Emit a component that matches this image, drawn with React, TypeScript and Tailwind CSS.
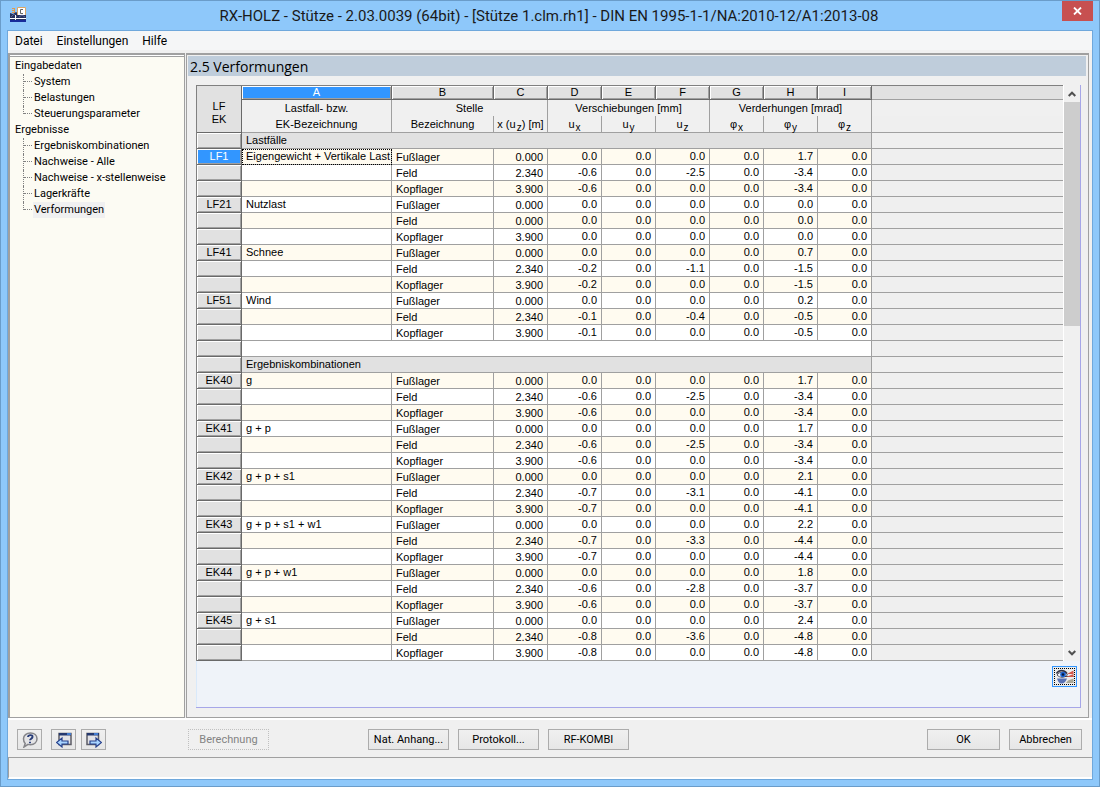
import React from "react";
import { clsx } from "clsx";

interface Load {
  id: string;
  name: string;
  x: string[];
  rows: string[][];
}

interface Section {
  title: string;
  loads: Load[];
}

const X = ["0.000", "2.340", "3.900"];
const PLACES = ["Fußlager", "Feld", "Kopflager"];
const LETTERS = ["A", "B", "C", "D", "E", "F", "G", "H", "I"];
const ZERO = ["0.0", "0.0", "0.0", "0.0", "0.0", "0.0"];

// ux, uz and phi-y are the only values that differ from zero
const values = (ux: string, uz: string, start: string, phi: string) => [
  ["0.0", "0.0", "0.0", "0.0", start, "0.0"],
  [ux, "0.0", uz, "0.0", phi, "0.0"],
  [ux, "0.0", "0.0", "0.0", phi, "0.0"],
];

const SECTIONS: Section[] = [
  {
    title: "Lastfälle",
    loads: [
      { id: "LF1", name: "Eigengewicht + Vertikale Last", x: X, rows: values("-0.6", "-2.5", "1.7", "-3.4") },
      { id: "LF21", name: "Nutzlast", x: ["0.000", "0.000", "3.900"], rows: [ZERO, ZERO, ZERO] },
      { id: "LF41", name: "Schnee", x: X, rows: values("-0.2", "-1.1", "0.7", "-1.5") },
      { id: "LF51", name: "Wind", x: X, rows: values("-0.1", "-0.4", "0.2", "-0.5") },
    ],
  },
  {
    title: "Ergebniskombinationen",
    loads: [
      { id: "EK40", name: "g", x: X, rows: values("-0.6", "-2.5", "1.7", "-3.4") },
      { id: "EK41", name: "g + p", x: X, rows: values("-0.6", "-2.5", "1.7", "-3.4") },
      { id: "EK42", name: "g + p + s1", x: X, rows: values("-0.7", "-3.1", "2.1", "-4.1") },
      { id: "EK43", name: "g + p + s1 + w1", x: X, rows: values("-0.7", "-3.3", "2.2", "-4.4") },
      { id: "EK44", name: "g + p + w1", x: X, rows: values("-0.6", "-2.8", "1.8", "-3.7") },
      { id: "EK45", name: "g + s1", x: X, rows: values("-0.8", "-3.6", "2.4", "-4.8") },
    ],
  },
];

const TREE = [
  { title: "Eingabedaten", items: ["System", "Belastungen", "Steuerungsparameter"] },
  {
    title: "Ergebnisse",
    items: ["Ergebniskombinationen", "Nachweise - Alle", "Nachweise - x-stellenweise", "Lagerkräfte", "Verformungen"],
  },
];

const cell = "h-4 p-0 border-r border-b border-[#a0a0a0] font-normal";
const groupHead = "h-4 border-r border-[#a0a0a0] p-0 font-normal leading-[14px]";
const subHead = "h-[17px] p-0 border-r border-b border-[#a0a0a0] font-normal leading-[14px]";
const raised = "shadow-[inset_1px_1px_0_#fff,inset_-1px_-1px_0_#a0a0a0]";
const rowHead = "h-4 p-0 border-r border-b border-[#696969] font-normal text-center";
const filler = "h-4 p-0 border-b border-[#a0a0a0] bg-[#efefef]";
const button =
  "h-[21px] border border-[#acacac] bg-linear-to-b from-[#f0f0f0] to-[#e6e6e6] text-[11px] leading-[19px] whitespace-nowrap flex items-center justify-center";

const AppIcon = () => (
  <svg width="16" height="16" viewBox="0 0 16 16" aria-hidden="true">
    <path d="M2 1h3v5H2V5h2V4H2V3h2V2H2z" fill="#e39a4c" />
    <path d="M0 6l3 1 3-2 3 2h7v8H0z" fill="#27325f" />
    <path d="M7.500.500h8v8h-8z" fill="#fff" stroke="#dca868" />
    <path d="M13 2.500h-2.500v4H13" fill="none" stroke="#666" />
    <path d="M0 8h16v6.500H0z" fill="#27325f" />
    <path d="M1 10l3-3 3 3M9 10l3-2 3 2" fill="none" stroke="#6672a0" strokeWidth=".8" />
    <path d="M0 11h16v1H0zM5 8h1v6H5z" fill="#fff" />
    <path d="M0 13h16v2H0z" fill="#182c9a" />
  </svg>
);

const HelpIcon = () => (
  <svg width="18" height="16" viewBox="0 0 18 16" aria-hidden="true">
    <path
      d="M9.500 1c3.800 0 6.500 2.400 6.500 5.800s-2.700 5.900-6.500 5.900c-1 0-1.700-.1-2.400-.300L3 15l1.200-3.500C3 10.400 2.500 8.800 2.500 6.800 2.500 3.400 5.500 1 9.500 1z"
      fill="#e4e4e6"
      stroke="#858589"
      strokeWidth="1.500"
    />
    <path d="M7 5c.3-2.600 5-2.500 4.500 0-.3 1.700-2.500 1.700-2.500 3.300M9 9.700v1.600" fill="none" stroke="#283c78" strokeWidth="1.900" />
  </svg>
);

const SheetIcon = ({ next }: { next?: boolean }) => (
  <svg width="16" height="16" viewBox="0 0 16 16" aria-hidden="true">
    <path d={next ? "M1 1.500h11.500v11H1z" : "M3 1.500h12v11H3z"} fill="#e2e2e6" stroke="#5c5c66" strokeWidth="1.500" />
    <path d={next ? "M1 1h12v2.500H1z" : "M3 1h12v2.500H3z"} fill="#24386e" />
    <path d={next ? "M8 2h4" : "M11 2h4"} stroke="#4d92f0" strokeWidth="1.500" />
    <path
      d={next ? "M4 9h6V6l5.500 4.500L10 15v-3H4z" : "M12 9H6V6L.500 10.500 6 15v-3h6z"}
      fill="#a8d4ff"
      stroke="#26408c"
      strokeWidth="1.200"
    />
  </svg>
);

const EyeIcon = () => (
  <svg width="18" height="15" viewBox="0 0 18 15" aria-hidden="true">
    <path d="M1 9.500h10c-1 3-3 5-5.500 5S2 12.500 1 9.500z" fill="#5a72b4" />
    <path d="M1 6c3-4 8-4 10.500 0C8 9 4 9 1 6z" fill="#f4f6ff" stroke="#555562" />
    <path d="M.500 4.500C3 .500 8 .500 11 4.500" fill="none" stroke="#333344" strokeWidth="1.600" />
    <circle cx="7" cy="5.500" r="2.800" fill="#1d63d0" />
    <circle cx="7" cy="5.500" r="1.200" fill="#0a1838" />
    <path d="M11 5l6.500-3.500V5z" fill="#d2574a" />
    <path d="M9 7h8.500v1H9z" fill="#444" />
    <path d="M10 8l7.500-3v3z" fill="#d2574a" />
    <path d="M10 14l2-2.500 5.500-2V14z" fill="#a9a797" />
  </svg>
);

const Chevron = ({ down }: { down?: boolean }) => (
  <svg width="8" height="6" viewBox="0 0 8 6" aria-hidden="true">
    <path d={down ? "M.700 1L4 4.300 7.300 1" : "M.700 5L4 1.700 7.300 5"} fill="none" stroke="#505050" strokeWidth="2" />
  </svg>
);

const Sub = ({ base, index }: { base: string; index: string }) => (
  <>
    {base}
    <sub className="ml-px text-[10px]">{index}</sub>
  </>
);

const Navigator = () => (
  <nav className="w-[177px] shrink-0 border-t-2 border-l-2 border-r border-b border-[#a0a0a0] bg-white pt-px">
    <div className="h-full border-t border-[#a0a0a0] bg-[#fcfbf3] pt-px pl-[5px] text-[11px] leading-4">
      {TREE.map((group) => (
        <div key={group.title}>
          <div>{group.title}</div>
          <ul>
            {group.items.map((item, i) => (
              <li key={item} className="flex pl-2">
                <span
                  className={clsx(
                    "w-px border-l border-dotted border-[#808080]",
                    i === group.items.length - 1 ? "h-2" : "h-4"
                  )}
                />
                <span className="h-2 w-2 border-b border-dotted border-[#808080]" />
                <a href="#" className={clsx("ml-px px-px", item === "Verformungen" && "bg-[#f0f0f0]")}>
                  {item}
                </a>
              </li>
            ))}
          </ul>
        </div>
      ))}
    </div>
  </nav>
);

const TableHead = () => (
  <thead>
    <tr>
      <th rowSpan={3} className="border-r border-b border-[#696969] bg-[#e1e1e1] p-0 pt-2 font-normal leading-[13px]">
        LF
        <br />
        EK
      </th>
      {LETTERS.map((letter) => (
        <th
          key={letter}
          className={clsx(
            "h-3.5 border-r border-b border-[#696969] p-0 font-normal leading-[13px]",
            raised,
            letter === "A" ? "bg-[#3296ff] text-white" : "bg-[#e1e1e1]"
          )}
        >
          {letter}
        </th>
      ))}
      <td className="h-3.5 border-b border-[#a0a0a0] bg-[#e1e1e1] p-0" />
    </tr>
    <tr>
      <th className={groupHead}>Lastfall- bzw.</th>
      <th colSpan={2} className={groupHead}>Stelle</th>
      <th colSpan={3} className={groupHead}>Verschiebungen [mm]</th>
      <th colSpan={3} className={groupHead}>Verderhungen [mrad]</th>
      <td />
    </tr>
    <tr>
      <th className={subHead}>EK-Bezeichnung</th>
      <th className={subHead}>Bezeichnung</th>
      <th className={subHead}>
        x (<Sub base="u" index="z" />) [m]
      </th>
      {["u", "φ"].map((base) =>
        ["x", "y", "z"].map((index) => (
          <th key={base + index} className={subHead}>
            <Sub base={base} index={index} />
          </th>
        ))
      )}
      <td className={filler} />
    </tr>
  </thead>
);

const LoadRows = ({ load, offset }: { load: Load; offset: number }) => {
  const selected = load.id === "LF1";
  return (
    <>
      {load.rows.map((row, i) => (
        <tr key={i} className={(offset + i) % 2 === 0 ? "bg-[#fffbf0]" : "bg-white"}>
          <th className={clsx(rowHead, raised, selected && i === 0 ? "bg-[#3296ff] text-white" : "bg-[#e1e1e1]")}>
            {i === 0 && load.id}
          </th>
          <td
            className={clsx(
              cell,
              "pl-1 whitespace-nowrap",
              selected && i === 0 && "outline outline-dotted -outline-offset-1 outline-black"
            )}
          >
            {i === 0 && load.name}
          </td>
          <td className={clsx(cell, "pt-px pl-1 leading-[14px]")}>{PLACES[i]}</td>
          <td className={clsx(cell, "pt-px pr-1 text-right leading-[14px]")}>{load.x[i]}</td>
          {row.map((value, n) => (
            <td key={n} className={clsx(cell, "pr-1 text-right")}>
              {value}
            </td>
          ))}
          <td className={filler} />
        </tr>
      ))}
    </>
  );
};

const ResultTable = () => (
  <table className="w-full table-fixed border-separate border-spacing-0 border-t border-l border-[#808080] font-['Liberation_Sans',Arial,sans-serif] text-[11px] leading-[15px]">
    <colgroup>
      <col className="w-[45px]" />
      <col className="w-[150px]" />
      <col className="w-[102px]" />
      {LETTERS.slice(2).map((letter) => (
        <col key={letter} className="w-[54px]" />
      ))}
      <col />
    </colgroup>
    <TableHead />
    <tbody>
      {SECTIONS.map((section, s) => (
        <React.Fragment key={section.title}>
          {s > 0 && (
            <tr>
              <th className={clsx(rowHead, raised, "bg-[#e1e1e1]")} />
              <td colSpan={9} className={clsx(cell, "bg-white")} />
              <td className={filler} />
            </tr>
          )}
          <tr>
            <th className={clsx(rowHead, raised, "bg-[#e1e1e1]")} />
            <td colSpan={9} className={clsx(cell, "bg-[#e1e1e1] pl-1")}>
              {section.title}
            </td>
            <td className={filler} />
          </tr>
          {section.loads.map((load, i) => (
            <LoadRows key={load.id} load={load} offset={i * 3} />
          ))}
        </React.Fragment>
      ))}
    </tbody>
  </table>
);

const Footer = () => (
  <footer>
    <div className="flex h-10 items-center border-t-2 border-white border-b border-b-[#a0a0a0] pt-0.5 pr-2.5 pl-[9px]">
      <button className={clsx(button, "w-[25px]")} aria-label="Hilfe">
        <HelpIcon />
      </button>
      <button className={clsx(button, "ml-[9px] w-[25px]")} aria-label="Vorherige Maske">
        <SheetIcon />
      </button>
      <button className={clsx(button, "ml-[5px] w-[25px]")} aria-label="Nächste Maske">
        <SheetIcon next />
      </button>
      <button disabled className="ml-[82px] h-[21px] w-[81px] border border-dotted border-[#c0c0c0] text-[11px] leading-[19px] text-[#838383]">
        Berechnung
      </button>
      <div className="ml-[99px] flex gap-[9px]">
        <button className={clsx(button, "w-[81px]")}>Nat. Anhang...</button>
        <button className={clsx(button, "w-[81px]")}>Protokoll...</button>
        <button className={clsx(button, "w-[81px]")}>RF-KOMBI</button>
      </div>
      <div className="ml-auto flex gap-[9px]">
        <button className={clsx(button, "w-[73px]")}>OK</button>
        <button className={clsx(button, "w-[73px]")}>Abbrechen</button>
      </div>
    </div>
    <div className="h-[21px] border-b-2 border-l border-b-white border-l-[#a0a0a0]" />
  </footer>
);

const App = () => {
  return (
    <div className="flex min-h-screen flex-col border border-[#6a9cc9] bg-[#8ec8fa] px-1.5 pb-1.5 font-[Roboto,Tahoma,sans-serif] text-black">
      <header className="flex h-[29px] items-start justify-between">
        <div className="flex w-[29px] pt-1.5 pl-[3px]">
          <AppIcon />
        </div>
        <h1 className="pt-[5px] text-[15px] leading-5 text-[#1a1a1a]">
          RX-HOLZ - Stütze - 2.03.0039 (64bit) - [Stütze 1.clm.rh1] - DIN EN 1995-1-1/NA:2010-12/A1:2013-08
        </h1>
        <button aria-label="Schließen" className="flex h-5 w-[31px] items-center justify-center bg-[#c75050]">
          <svg width="9" height="8" viewBox="0 0 9 8" aria-hidden="true">
            <path d="M1 .500l7 7M8 .500l-7 7" stroke="#fff" strokeWidth="1.800" />
          </svg>
        </button>
      </header>
      <div className="flex flex-1 flex-col border border-[#6fa8dc] bg-[#f0f0f0]">
        <nav className="flex h-[19px] gap-3.5 bg-[#f5f6f7] px-[7px] text-[12px] leading-5">
          <a href="#">Datei</a>
          <a href="#">Einstellungen</a>
          <a href="#">Hilfe</a>
        </nav>
        <div className="mt-[3px] flex flex-1 gap-px">
          <Navigator />
          <main className="mr-[3px] flex min-w-0 flex-1 flex-col border-t-2 border-r border-b border-l border-[#a0a0a0] pr-0.5 pb-[9px]">
            <h2 className="mt-px ml-px h-5 bg-[#bfcddb] pl-0.5 font-['Open_Sans','Segoe_UI',sans-serif] text-[14px] leading-[22px]">
              2.5 Verformungen
            </h2>
            <div className="mt-[9px] mr-[5px] ml-[9px] flex flex-1 flex-col border-r border-b border-[#a6a6e8]">
              <div className="flex">
                <div className="min-w-0 flex-1">
                  <ResultTable />
                </div>
                <div className="flex w-[17px] flex-col border-l border-white bg-[#f0f0f0]">
                  <button aria-label="Nach oben" className="flex h-[17px] items-center justify-center">
                    <Chevron />
                  </button>
                  <div className="h-56 bg-[#cdcdcd]" />
                  <button aria-label="Nach unten" className="mt-auto flex h-[17px] items-center justify-center">
                    <Chevron down />
                  </button>
                </div>
              </div>
              <div className="flex flex-1 justify-end border-l border-[#d9e9fa] bg-[#eff3f9] pt-[5px] pr-[3px]">
                <button aria-label="Grafik" className="flex h-[21px] w-[25px] items-center justify-center border border-[#3296ff] bg-[#ececec]">
                  <span className="flex h-[17px] w-[21px] items-center justify-center border border-dotted border-black">
                    <EyeIcon />
                  </span>
                </button>
              </div>
            </div>
          </main>
        </div>
        <Footer />
      </div>
    </div>
  );
};

export default App;
